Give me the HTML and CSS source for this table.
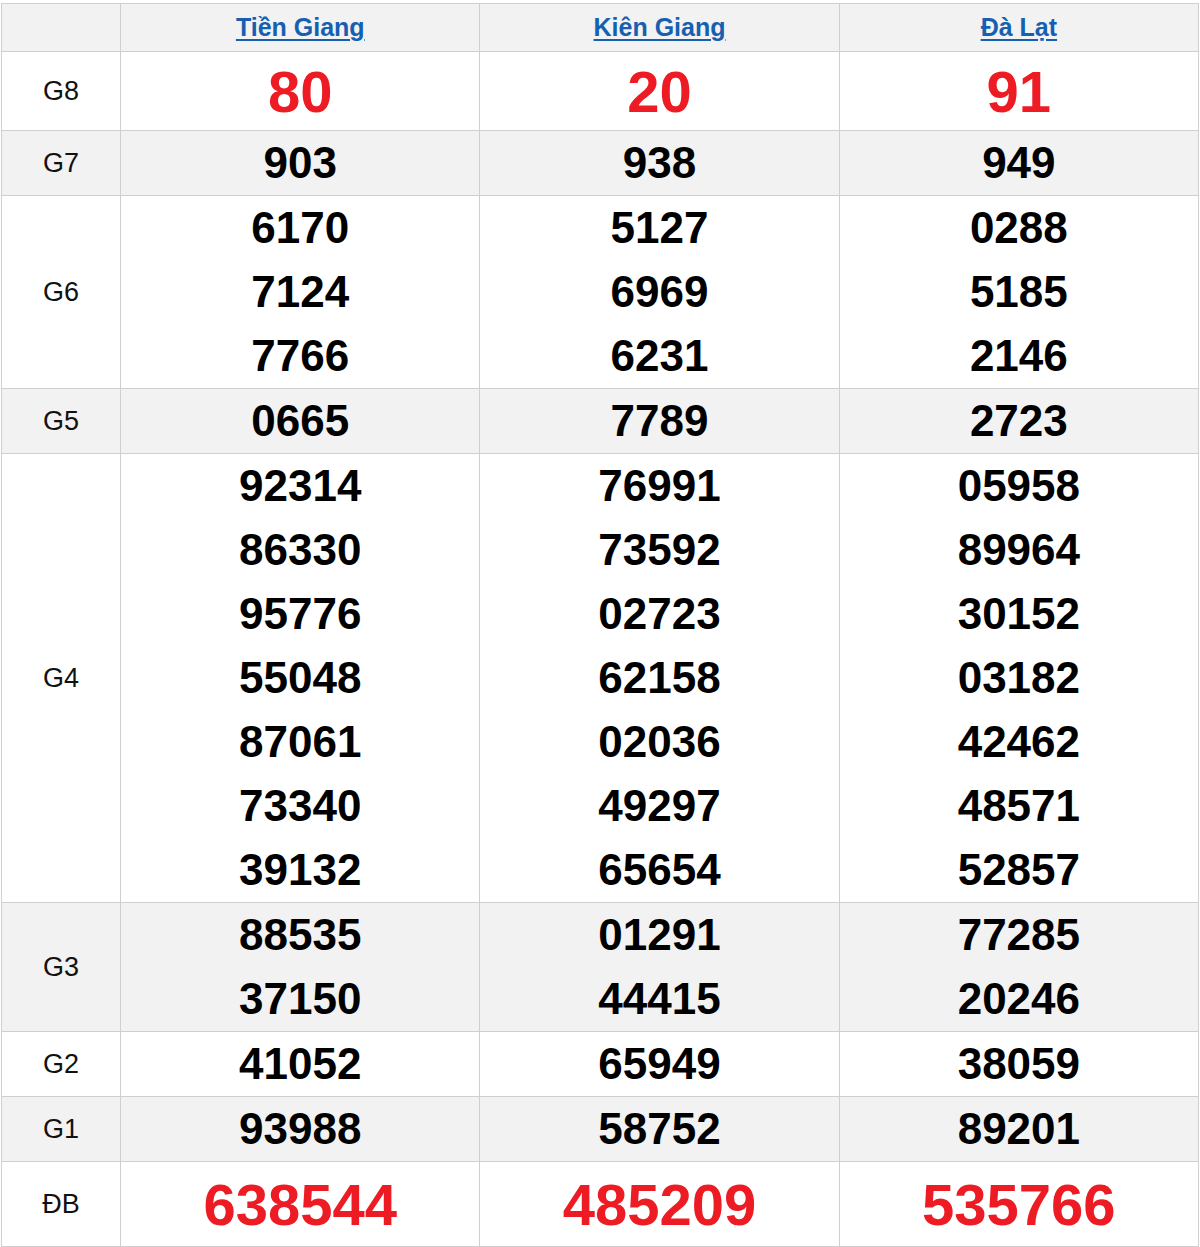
FILE: index.html
```html
<!DOCTYPE html>
<html lang="vi">
<head>
<meta charset="utf-8">
<title>Kết quả xổ số</title>
<link rel="stylesheet" href="styles.css">
</head>
<body>
<table class="kq">
  <colgroup>
    <col class="c-label">
    <col class="c-prov">
    <col class="c-prov">
    <col class="c-prov">
  </colgroup>
  <thead>
    <tr class="head">
      <th></th>
      <th><a href="#">Tiền Giang</a></th>
      <th><a href="#">Kiên Giang</a></th>
      <th><a href="#">Đà Lạt</a></th>
    </tr>
  </thead>
  <tbody>
    <tr class="g8">
      <td class="lbl">G8</td>
      <td class="red big">80</td>
      <td class="red big">20</td>
      <td class="red big">91</td>
    </tr>
    <tr class="alt">
      <td class="lbl">G7</td>
      <td class="num"><div>903</div></td>
      <td class="num"><div>938</div></td>
      <td class="num"><div>949</div></td>
    </tr>
    <tr>
      <td class="lbl">G6</td>
      <td class="num"><div>6170</div><div>7124</div><div>7766</div></td>
      <td class="num"><div>5127</div><div>6969</div><div>6231</div></td>
      <td class="num"><div>0288</div><div>5185</div><div>2146</div></td>
    </tr>
    <tr class="alt">
      <td class="lbl">G5</td>
      <td class="num"><div>0665</div></td>
      <td class="num"><div>7789</div></td>
      <td class="num"><div>2723</div></td>
    </tr>
    <tr>
      <td class="lbl">G4</td>
      <td class="num"><div>92314</div><div>86330</div><div>95776</div><div>55048</div><div>87061</div><div>73340</div><div>39132</div></td>
      <td class="num"><div>76991</div><div>73592</div><div>02723</div><div>62158</div><div>02036</div><div>49297</div><div>65654</div></td>
      <td class="num"><div>05958</div><div>89964</div><div>30152</div><div>03182</div><div>42462</div><div>48571</div><div>52857</div></td>
    </tr>
    <tr class="alt">
      <td class="lbl">G3</td>
      <td class="num"><div>88535</div><div>37150</div></td>
      <td class="num"><div>01291</div><div>44415</div></td>
      <td class="num"><div>77285</div><div>20246</div></td>
    </tr>
    <tr>
      <td class="lbl">G2</td>
      <td class="num"><div>41052</div></td>
      <td class="num"><div>65949</div></td>
      <td class="num"><div>38059</div></td>
    </tr>
    <tr class="alt">
      <td class="lbl">G1</td>
      <td class="num"><div>93988</div></td>
      <td class="num"><div>58752</div></td>
      <td class="num"><div>89201</div></td>
    </tr>
    <tr class="db">
      <td class="lbl">ĐB</td>
      <td class="red big">638544</td>
      <td class="red big">485209</td>
      <td class="red big">535766</td>
    </tr>
  </tbody>
</table>
</body>
</html>
```

FILE: styles.css
```css
html, body {
  margin: 0;
  padding: 0;
  background: #ffffff;
}

body {
  padding-top: 3px;
  font-family: "Liberation Sans", Arial, sans-serif;
  color: #000;
}

.kq {
  width: 1198px;
  margin-left: 1px;
  border-collapse: collapse;
  table-layout: fixed;
  border: 1px solid #cfcfcf;
}

.c-label { width: 119px; }
.c-prov { width: 359px; }

.kq th,
.kq td {
  border: 1px solid #cfcfcf;
  padding: 0;
  text-align: center;
  vertical-align: middle;
}

.head th {
  background: #f2f2f2;
  height: 47px;
  font-size: 25px;
  font-weight: bold;
}

.head a {
  color: #1560b0;
  text-decoration: underline;
  text-underline-offset: 3px;
  text-decoration-thickness: 2px;
}

.alt td {
  background: #f2f2f2;
}

.lbl {
  font-size: 27px;
  font-weight: normal;
  color: #111;
}

.num {
  font-size: 44px;
  font-weight: bold;
  color: #000;
}

.num div {
  line-height: 64px;
  height: 64px;
}

.red {
  color: #ed1c24;
  font-weight: bold;
}

.g8 td {
  height: 78px;
}

.g8 .big {
  font-size: 58px;
}

.db td {
  height: 84px;
}

.db .big {
  font-size: 58px;
}
```
